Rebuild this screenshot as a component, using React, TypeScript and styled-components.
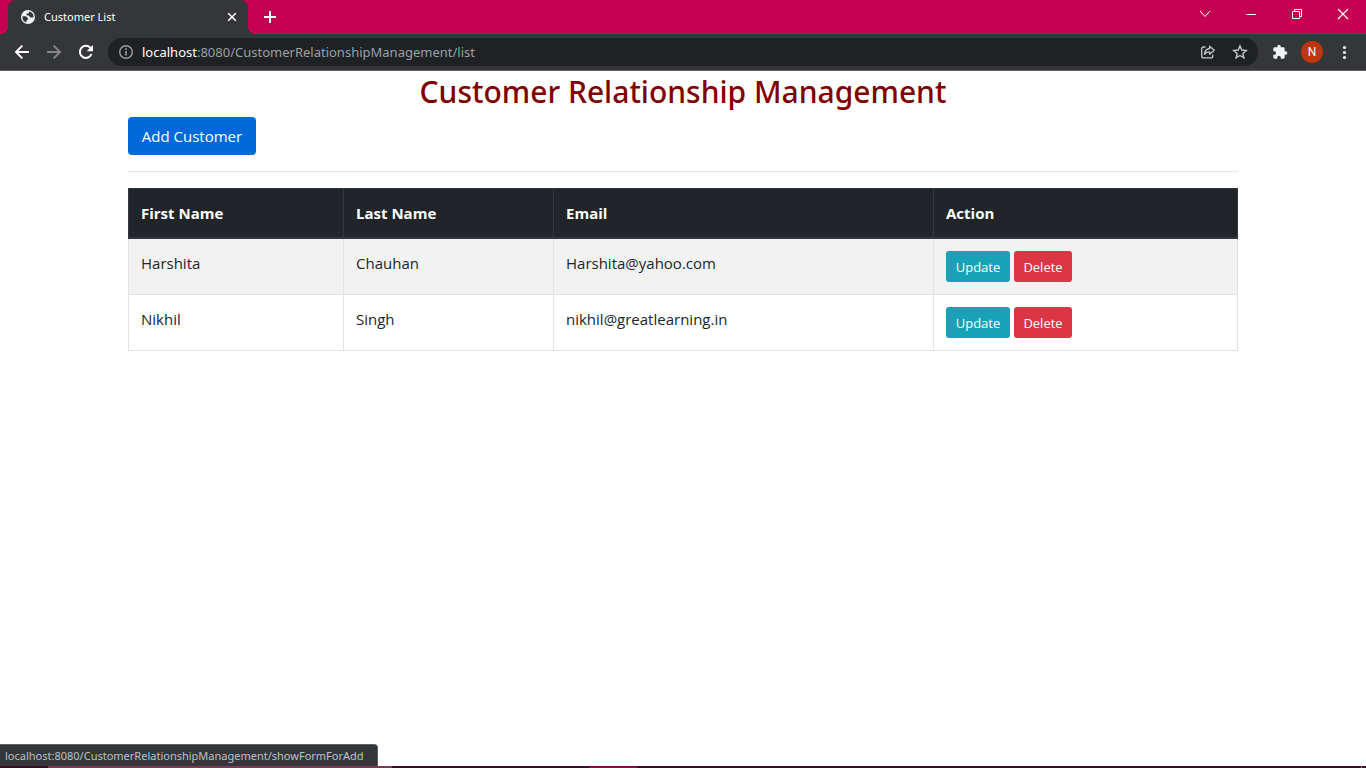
import React from "react";
import styled, { createGlobalStyle } from "styled-components";

const GlobalStyle = createGlobalStyle`
  *, *::before, *::after { box-sizing: border-box; }
  body {
    margin: 0;
    background: #fff;
    color: #212529;
    font-family: "Open Sans", "Segoe UI", sans-serif;
    font-size: 15px;
    line-height: 24px;
  }
`;

const Window = styled.div`
  display: flex;
  flex-direction: column;
  min-height: 100vh;
`;

const TitleBar = styled.header`
  display: flex;
  height: 34px;
  padding-left: 8px;
  background: #c50051;
`;

const Tab = styled.div`
  position: relative;
  display: flex;
  align-items: center;
  width: 240px;
  padding: 0 8px 0 12px;
  border-radius: 8px 8px 0 0;
  background: #35363a;
  color: #fff;

  &::before,
  &::after {
    content: "";
    position: absolute;
    bottom: 0;
    width: 8px;
    height: 8px;
  }
  &::before {
    right: 100%;
    background: radial-gradient(circle at 0 0, transparent 8px, #35363a 8px);
  }
  &::after {
    left: 100%;
    background: radial-gradient(circle at 100% 0, transparent 8px, #35363a 8px);
  }
`;

const TabTitle = styled.span`
  flex: 1;
  margin-left: 8px;
  font-family: "Noto Sans", sans-serif;
  font-size: 11px;
  line-height: 16px;
`;

const IconButton = styled.button<{ $width?: number; $color?: string }>`
  display: flex;
  align-items: center;
  justify-content: center;
  flex: none;
  width: ${(p) => p.$width ?? 32}px;
  height: 28px;
  padding: 0;
  border: 0;
  background: none;
  color: ${(p) => p.$color ?? "#fff"};
`;

const NewTab = styled(IconButton)`
  height: 34px;
  margin-left: 8px;
`;

const Caption = styled.div`
  display: flex;
  margin-left: auto;
`;

const Toolbar = styled.nav`
  display: flex;
  align-items: center;
  height: 37px;
  padding: 0 6px;
  border-bottom: 1px solid #5f6065;
  background: #35363a;
`;

const AddressBar = styled.div`
  display: flex;
  flex: 1;
  align-items: center;
  height: 28px;
  margin: 0 6px;
  padding: 0 2px 0 10px;
  border-radius: 14px;
  background: #202124;
`;

const Address = styled.div`
  flex: 1;
  margin-left: 8px;
  color: #9aa0a6;
  font-family: "Noto Sans", sans-serif;
  font-size: 13px;
  line-height: 20px;
  outline: none;
`;

const Host = styled.span`
  color: #fff;
`;

const Avatar = styled.span`
  width: 22px;
  height: 22px;
  border-radius: 50%;
  background: #bf360c;
  color: #fff;
  font: 12px/22px Roboto, sans-serif;
  text-align: center;
`;

const Page = styled.main`
  flex: 1;
  width: 100%;
  max-width: 1140px;
  margin: 0 auto;
  padding: 0 15px;
`;

const Heading = styled.h1`
  margin: 0;
  padding: 2px 0 6px;
  color: maroon;
  font-family: "Noto Sans", sans-serif;
  font-size: 30px;
  font-weight: 500;
  line-height: 38px;
  text-align: center;
`;

const Button = styled.button<{ $color: string; $small?: boolean }>`
  padding: ${(p) => (p.$small ? "6px 8px 4px" : "7px 12px")};
  border: 0;
  border-radius: ${(p) => (p.$small ? 3 : 4)}px;
  background: ${(p) => p.$color};
  color: #fff;
  font-family: inherit;
  font-size: ${(p) => (p.$small ? 13 : 15)}px;
  line-height: ${(p) => (p.$small ? 21 : 24)}px;
`;

const AddButton = styled(Button)`
  display: block;
  min-width: 128px;
`;

const Divider = styled.hr`
  margin: 16px 0;
  border: 0;
  border-top: 1px solid #e5e5e5;
`;

const Table = styled.table`
  width: 100%;
  border-collapse: collapse;
  table-layout: fixed;
`;

const Column = styled.col<{ $width?: number }>`
  width: ${(p) => (p.$width ? `${p.$width}px` : "auto")};
`;

const HeadCell = styled.th`
  padding: 12px;
  border: 1px solid #32383e;
  border-bottom-width: 2px;
  background: #212529;
  color: #fff;
  font-weight: 700;
  text-align: left;
`;

const Row = styled.tr`
  &:nth-child(odd) {
    background: #f2f2f2;
  }
`;

const Cell = styled.td`
  padding: 12px;
  border: 1px solid #dee2e6;
  vertical-align: top;
`;

const Actions = styled.div`
  display: flex;
  gap: 4px;
`;

const ActionButton = styled(Button)<{ $wide?: boolean }>`
  min-width: ${(p) => (p.$wide ? 64 : 58)}px;
`;

const Footer = styled.footer`
  position: relative;
`;

const StatusBubble = styled.div`
  position: absolute;
  bottom: 100%;
  left: 0;
  width: 378px;
  height: 22px;
  padding: 0 5px;
  border-top: 1px solid #5f6065;
  border-right: 1px solid #5f6065;
  border-radius: 0 4px 0 0;
  background: #35363a;
  color: #bdc1c6;
  font-family: "Noto Sans", sans-serif;
  font-size: 11px;
  line-height: 22px;
  white-space: nowrap;
`;

const Taskbar = styled.div`
  display: flex;
  height: 2px;
  padding: 0 4px 0 48px;
  background: #410b27;
`;

const TaskItem = styled.span<{ $width: number; $color: string }>`
  width: ${(p) => p.$width}px;
  background: ${(p) => p.$color};
`;

const TaskGap = styled.span<{ $width?: number }>`
  flex: ${(p) => (p.$width ? `0 0 ${p.$width}px` : "1")};
`;

const customers = [
  { first: "Harshita", last: "Chauhan", email: "Harshita@yahoo.com" },
  { first: "Nikhil", last: "Singh", email: "nikhil@greatlearning.in" },
];

const stroke = { fill: "none", stroke: "currentColor" } as const;

const GlobeIcon = () => (
  <svg width="16" height="16" viewBox="0 0 16 16">
    <circle cx="8" cy="8" r="7" fill="#f1f3f4" />
    <path
      d="M2.500 7.200 5.800 7.300 8 9.300 7.800 10.800 6.600 11.300 6.400 13.400A5.600 5.600 0 0 1 2.500 7.200ZM9.200 2.600 8.700 4.200 6.600 4.800 6.500 6.200 8.800 6.400 10.200 8.400 13.500 8.500A5.600 5.600 0 0 0 9.200 2.600Z"
      fill="#35363a"
    />
  </svg>
);

const CloseTabIcon = () => (
  <svg width="16" height="16" viewBox="0 0 16 16">
    <path d="m4.2 4.200 7.600 7.600m0-7.600-7.600 7.600" strokeWidth="1.600" {...stroke} />
  </svg>
);

const PlusIcon = () => (
  <svg width="16" height="16" viewBox="0 0 16 16">
    <path d="M8 2v12M2 8h12" strokeWidth="2" {...stroke} />
  </svg>
);

const ChevronIcon = () => (
  <svg width="16" height="16" viewBox="0 0 16 16">
    <path d="m3 5 5 5.500L13 5" {...stroke} />
  </svg>
);

const MinimizeIcon = () => (
  <svg width="16" height="16" viewBox="0 0 16 16">
    <path d="M3 8.500h10" {...stroke} />
  </svg>
);

const RestoreIcon = () => (
  <svg width="16" height="16" viewBox="0 0 16 16">
    <path d="M3.500 5.500h7v7h-7zM5.500 5.500v-2h7v7h-2" {...stroke} />
  </svg>
);

const CloseIcon = () => (
  <svg width="16" height="16" viewBox="0 0 16 16">
    <path d="m3 3 10 10M13 3 3 13" strokeWidth="1.200" {...stroke} />
  </svg>
);

const BackIcon = () => (
  <svg width="16" height="16" viewBox="0 0 16 16">
    <path d="M15 8H2.500M8.300 1.700 2 8l6.300 6.300" strokeWidth="1.900" {...stroke} />
  </svg>
);

const ForwardIcon = () => (
  <svg width="16" height="16" viewBox="0 0 16 16">
    <path d="M1 8h12.500M7.700 1.700 14 8l-6.300 6.300" strokeWidth="1.900" {...stroke} />
  </svg>
);

const ReloadIcon = () => (
  <svg width="16" height="16" viewBox="0 0 16 16">
    <path d="M13.500 10A6 6 0 1 1 12.300 3.800L14 5.500" strokeWidth="2" {...stroke} />
    <path d="M15 1v6.300H8.700z" fill="currentColor" />
  </svg>
);

const InfoIcon = () => (
  <svg width="16" height="16" viewBox="0 0 16 16">
    <circle cx="8" cy="8" r="6.300" stroke="#9aa0a6" strokeWidth="1.400" fill="none" />
    <path d="M8 7v4.500M8 4.300v1.600" stroke="#9aa0a6" strokeWidth="1.600" />
  </svg>
);

const ShareIcon = () => (
  <svg width="16" height="16" viewBox="0 0 16 16">
    <path
      d="M5.500 3H3.700C2.500 3 1.700 3.700 1.700 4.900V12c0 1.200.8 1.900 2 1.900h7.100c1.200 0 2-.7 2-1.900v-1.300M9.600 2.200l4.700 4-4.700 4V7.900c-2.600 0-4.100.8-5.100 2.500.2-3.300 2-5.500 5.100-5.900z"
      strokeWidth="1.300"
      strokeLinejoin="round"
      {...stroke}
    />
  </svg>
);

const StarIcon = () => (
  <svg width="16" height="16" viewBox="0 0 16 16">
    <path
      d="m8 1.900 1.750 4.150 4.500.4-3.400 2.950 1 4.400L8 11.500l-3.850 2.300 1-4.400-3.400-2.950 4.500-.4z"
      strokeWidth="1.400"
      {...stroke}
    />
  </svg>
);

const PuzzleIcon = () => (
  <svg width="16" height="16" viewBox="0 0 24 24">
    <path
      d="M20.500 11H19V7a2 2 0 0 0-2-2h-4V3.500a2.500 2.500 0 0 0-5 0V5H4a2 2 0 0 0-2 2v3.800h1.500a2.700 2.700 0 0 1 0 5.400H2V20a2 2 0 0 0 2 2h3.800v-1.500a2.700 2.700 0 0 1 5.400 0V22H17a2 2 0 0 0 2-2v-4h1.500a2.500 2.500 0 0 0 0-5z"
      fill="currentColor"
    />
  </svg>
);

const MenuIcon = () => (
  <svg width="16" height="16" viewBox="0 0 16 16" fill="currentColor">
    <circle cx="8.500" cy="3.500" r="1.600" />
    <circle cx="8.500" cy="8.500" r="1.600" />
    <circle cx="8.500" cy="13.500" r="1.600" />
  </svg>
);

export default function App() {
  return (
    <Window>
      <GlobalStyle />
      <TitleBar>
        <Tab>
          <GlobeIcon />
          <TabTitle>Customer List</TabTitle>
          <IconButton $width={16} aria-label="Close tab">
            <CloseTabIcon />
          </IconButton>
        </Tab>
        <NewTab $width={28} aria-label="New tab">
          <PlusIcon />
        </NewTab>
        <Caption>
          <IconButton $width={46} aria-label="Search tabs">
            <ChevronIcon />
          </IconButton>
          <IconButton $width={46} aria-label="Minimize">
            <MinimizeIcon />
          </IconButton>
          <IconButton $width={46} aria-label="Restore">
            <RestoreIcon />
          </IconButton>
          <IconButton $width={46} aria-label="Close">
            <CloseIcon />
          </IconButton>
        </Caption>
      </TitleBar>
      <Toolbar>
        <IconButton aria-label="Back">
          <BackIcon />
        </IconButton>
        <IconButton $color="#85868a" aria-label="Forward">
          <ForwardIcon />
        </IconButton>
        <IconButton aria-label="Reload">
          <ReloadIcon />
        </IconButton>
        <AddressBar>
          <InfoIcon />
          <Address
            role="textbox"
            aria-label="Address"
            contentEditable
            suppressContentEditableWarning
            spellCheck={false}
          >
            <Host>localhost</Host>:8080/CustomerRelationshipManagement/list
          </Address>
          <IconButton $color="#c4c7cb" aria-label="Share">
            <ShareIcon />
          </IconButton>
          <IconButton $color="#c4c7cb" aria-label="Bookmark">
            <StarIcon />
          </IconButton>
        </AddressBar>
        <IconButton $color="#f1f3f4" aria-label="Extensions">
          <PuzzleIcon />
        </IconButton>
        <IconButton aria-label="Profile">
          <Avatar>N</Avatar>
        </IconButton>
        <IconButton $color="#f1f3f4" aria-label="Menu">
          <MenuIcon />
        </IconButton>
      </Toolbar>

      <Page>
        <Heading>Customer Relationship Management</Heading>
        <AddButton $color="#0069d9">Add Customer</AddButton>
        <Divider />
        <Table>
          <colgroup>
            <Column $width={215} />
            <Column $width={210} />
            <Column $width={380} />
            <Column />
          </colgroup>
          <thead>
            <tr>
              <HeadCell scope="col">First Name</HeadCell>
              <HeadCell scope="col">Last Name</HeadCell>
              <HeadCell scope="col">Email</HeadCell>
              <HeadCell scope="col">Action</HeadCell>
            </tr>
          </thead>
          <tbody>
            {customers.map((c) => (
              <Row key={c.email}>
                <Cell>{c.first}</Cell>
                <Cell>{c.last}</Cell>
                <Cell>{c.email}</Cell>
                <Cell>
                  <Actions>
                    <ActionButton $small $wide $color="#17a2b8">
                      Update
                    </ActionButton>
                    <ActionButton $small $color="#dc3545">
                      Delete
                    </ActionButton>
                  </Actions>
                </Cell>
              </Row>
            ))}
          </tbody>
        </Table>
      </Page>

      <Footer>
        <StatusBubble role="status">
          localhost:8080/CustomerRelationshipManagement/showFormForAdd
        </StatusBubble>
        <Taskbar>
          <TaskItem $width={344} $color="#7c3a55" />
          <TaskGap $width={197} />
          <TaskItem $width={48} $color="#8b0a42" />
          <TaskGap />
          <TaskItem $width={1} $color="#9a7a88" />
        </Taskbar>
      </Footer>
    </Window>
  );
}
